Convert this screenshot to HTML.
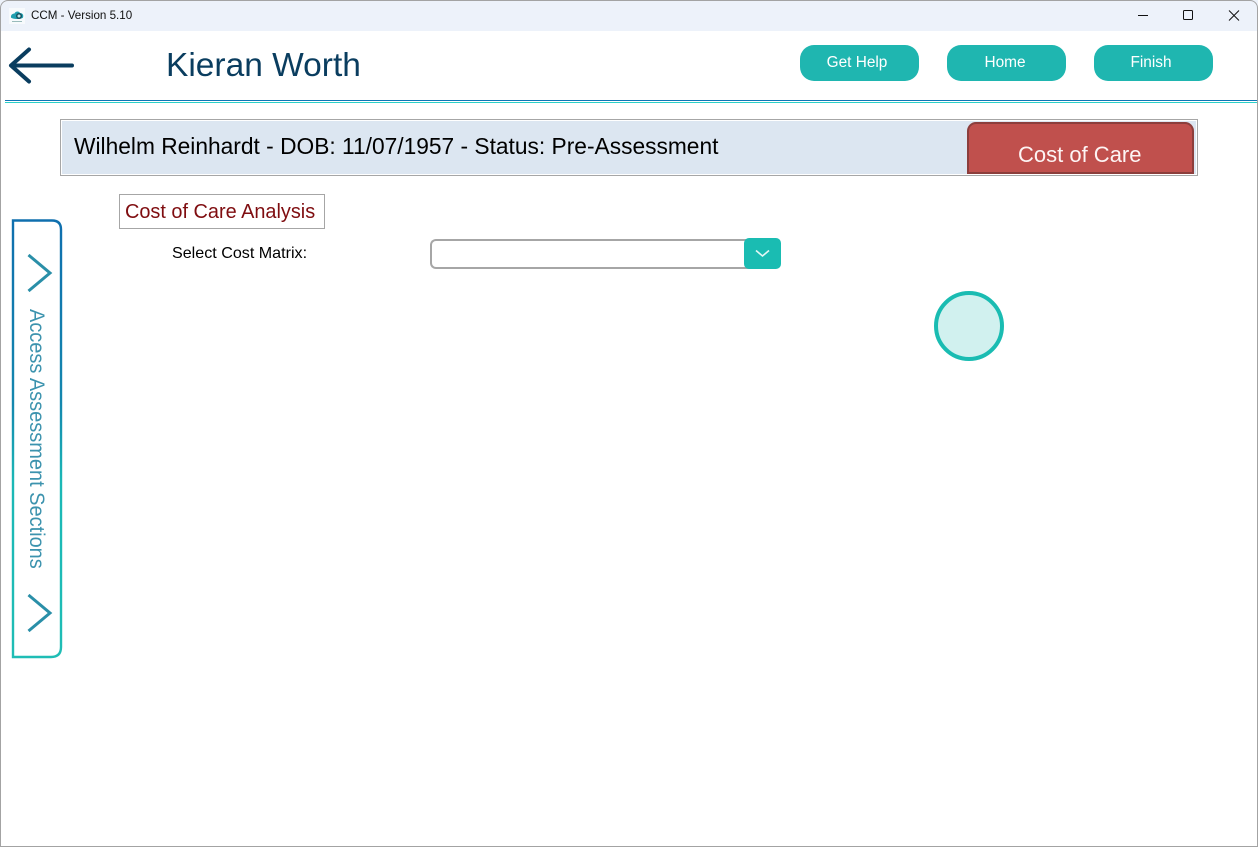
<!DOCTYPE html>
<html><head><meta charset="utf-8"><title>CCM - Version 5.10</title>
<style>
html,body{margin:0;padding:0;width:1258px;height:847px;overflow:hidden;background:#fff;}
body{position:relative;font-family:"Liberation Sans",sans-serif;}
.a{position:absolute;white-space:nowrap;}
.btn{position:absolute;top:45px;width:119px;height:36px;border-radius:14px;background:#1fb6b0;color:#fff;font-size:15.4px;line-height:35px;text-align:center;}
</style></head>
<body>
<div class="a" style="left:0;top:0;width:1258px;height:31px;background:#edf2fa;"></div>
<svg class="a" style="left:9px;top:8px" width="16" height="16" viewBox="0 0 16 16">
<rect width="16" height="16" fill="#f7fafc"/>
<path d="M2 9.5C1.5 6.5 4 5.5 5.5 5.5C6.5 3 10 3 11 5C13 5 15 6.5 14 9.5C13 11.5 3.5 11.5 2 9.5Z" fill="#1f9fb0"/>
<circle cx="10" cy="8" r="3" fill="#14505f"/><circle cx="10" cy="8" r="1.5" fill="#bfe6ea"/>
<rect x="3" y="13" width="10" height="1" fill="#9bb"/>
</svg>
<div class="a" style="left:31px;top:8px;font-size:11.6px;line-height:16px;color:#111;">CCM - Version 5.10</div>
<svg class="a" style="left:1130px;top:5px" width="120" height="22" viewBox="0 0 120 22" fill="none" stroke="#111" stroke-width="1">
<path d="M8 10.5H18"/><rect x="53.5" y="5.5" width="9" height="9" rx="1"/><path d="M99 5.5L109 15.5M109 5.5L99 15.5"/>
</svg>
<svg class="a" style="left:4px;top:42px" width="76" height="50" viewBox="0 0 76 50" fill="none" stroke="#0a3d5f" stroke-width="4" stroke-linecap="round" stroke-linejoin="round">
<path d="M68 23.5H8M25 7.5L7 23.5L25 39.5"/>
</svg>
<div class="a" style="left:166px;top:45px;font-size:33.5px;line-height:42px;color:#0a3d5f;">Kieran Worth</div>
<div class="btn" style="left:800px;"><span style="margin-left:-5px">Get Help</span></div>
<div class="btn" style="left:947px;"><span style="margin-left:-3px">Home</span></div>
<div class="btn" style="left:1094px;"><span style="margin-left:-5px">Finish</span></div>
<div class="a" style="left:5px;top:100px;width:1252px;height:1px;background:#0f75b5;"></div>
<div class="a" style="left:5px;top:102px;width:1252px;height:1px;background:#2cd0c8;"></div>

<div class="a" style="left:60px;top:119px;width:1136px;height:55px;border:1px solid #a6a6a6;background:#fff;"></div>
<div class="a" style="left:62px;top:121px;width:1134px;height:53px;background:#dce6f1;"></div>
<div class="a" style="left:74px;top:132px;font-size:22.75px;line-height:29px;color:#000;">Wilhelm Reinhardt - DOB: 11/07/1957 - Status: Pre-Assessment</div>
<div class="a" style="left:967px;top:122px;width:223px;height:48px;background:#c0504d;border:2px solid #8c3e3c;border-radius:9px 9px 0 0;"></div>
<div class="a" style="left:1018px;top:141px;font-size:22px;line-height:28px;color:#fdf4f4;">Cost of Care</div>

<div class="a" style="left:119px;top:194px;width:204px;height:33px;border:1px solid #a6a6a6;background:#fff;"></div>
<div class="a" style="left:125px;top:200px;font-size:19.9px;line-height:24px;color:#7f0d10;">Cost of Care Analysis</div>
<div class="a" style="left:172px;top:244px;font-size:16.1px;line-height:19px;color:#000;">Select Cost Matrix:</div>

<div class="a" style="left:430px;top:239px;width:322px;height:26px;border:2px solid #a6a6a6;border-right:none;border-radius:6px 0 0 6px;background:#fff;"></div>
<div class="a" style="left:744px;top:238px;width:37px;height:31px;background:#1abcb2;border-radius:5px;"></div>
<svg class="a" style="left:744px;top:238px" width="37" height="31" viewBox="0 0 37 31" fill="none" stroke="#e4f7f5" stroke-width="1.6"><path d="M12 12.5L18.5 18L25 12.5"/></svg>

<div class="a" style="left:934px;top:291px;width:62px;height:62px;border:4px solid #1abcb2;border-radius:50%;background:#d1f1ef;"></div>

<svg class="a" style="left:0;top:210px" width="72" height="460" viewBox="0 0 72 460" fill="none">
<defs><linearGradient id="g" gradientUnits="userSpaceOnUse" x1="0" y1="9" x2="0" y2="448">
<stop offset="0" stop-color="#0f6fae"/><stop offset="0.42" stop-color="#1487ae"/><stop offset="0.6" stop-color="#1bb8b6"/><stop offset="1" stop-color="#1fbdb5"/></linearGradient></defs>
<path d="M13 10.5H52Q61 10.5 61 19.5V437Q61 447 51 447H13Z" stroke="url(#g)" stroke-width="2.4"/>
<path d="M28.5 45L50 63L28.5 81M28.5 385L50 403L28.5 421" stroke="#2a8fa8" stroke-width="3"/>
</svg>
<div class="a" style="left:27px;top:309px;writing-mode:vertical-rl;font-size:21.6px;line-height:20px;color:#3c93ae;transform:scaleY(0.925);transform-origin:top left;">Access Assessment Sections</div>

<div class="a" style="left:0;top:0;width:1258px;height:847px;box-sizing:border-box;border:1px solid #a3a3a3;border-radius:8px 8px 0 0;"></div>
</body></html>
